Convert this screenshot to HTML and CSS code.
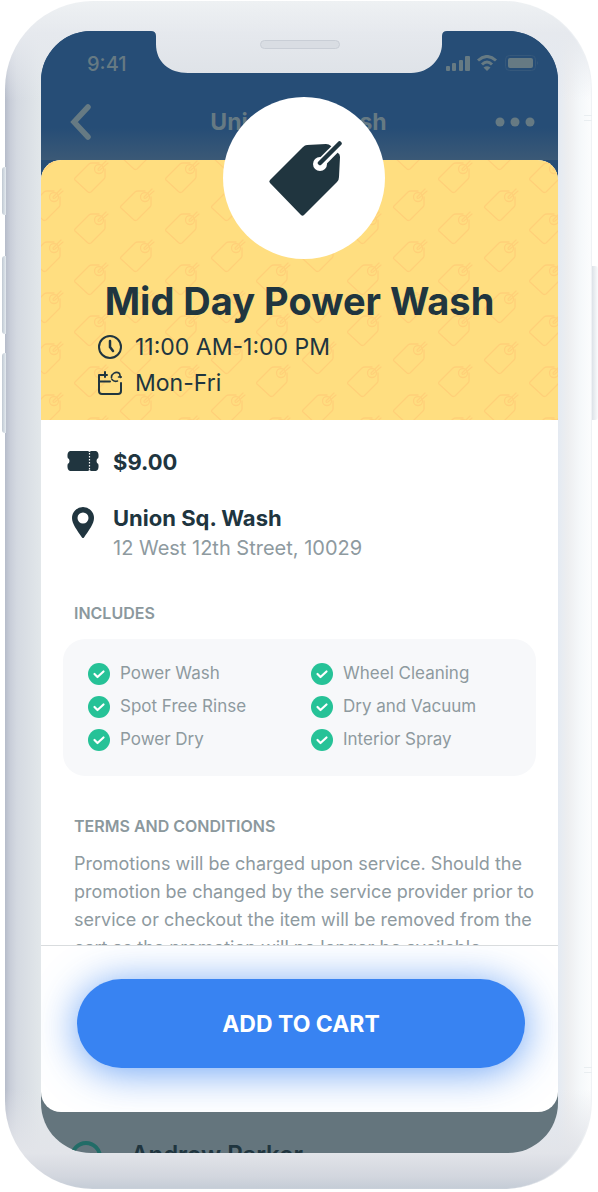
FILE: index.html
```html
<!DOCTYPE html>
<html lang="en">
<head>
<meta charset="utf-8">
<meta name="viewport" content="width=device-width, initial-scale=1">
<title>Mid Day Power Wash</title>
<link rel="stylesheet" href="styles.css">
</head>
<body>
<svg class="defs" aria-hidden="true">
  <defs>
    <g id="tag-outline" fill="none" stroke="#ffd078" stroke-width="1.3" stroke-linejoin="round" stroke-linecap="round">
      <path d="M25 2 H18 Q16 2 15 3 L1 17 Q0 18 1 19 L14 31 Q15 32 17 31 L30 18 Q31 17 31 16 V8"/>
      <circle cx="25" cy="8" r="4.5"/>
      <path d="M32 0 L24 8 Q24 10 26 9 L34 2"/>
    </g>
    <pattern id="tags" width="91" height="51" patternUnits="userSpaceOnUse">
      <use href="#tag-outline" x="33" y="1"/>
      <use href="#tag-outline" x="79" y="29"/>
      <use href="#tag-outline" x="-12" y="29"/>
      <use href="#tag-outline" x="79" y="-22"/>
      <use href="#tag-outline" x="-12" y="-22"/>
    </pattern>
    <symbol id="check" viewBox="0 0 22 22">
      <circle cx="11" cy="11" r="11" fill="#26c297"/>
      <path d="M6.500 11 L9.500 14 L15.500 8.500" fill="none" stroke="#fff" stroke-width="2.200" stroke-linecap="round" stroke-linejoin="round"/>
    </symbol>
  </defs>
</svg>

<div class="phone">
  <span class="side-key mute"></span>
  <span class="side-key vol-up"></span>
  <span class="side-key vol-down"></span>
  <span class="side-key power"></span>
  <span class="antenna upper"></span>
  <span class="antenna lower"></span>

  <main class="screen">
    <div class="notch">
      <svg width="291" height="42" viewBox="0 0 291 42" aria-hidden="true">
        <defs><linearGradient id="notch-fill" x2="0" y2="1"><stop stop-color="#e6e9ee"/><stop offset="1" stop-color="#dfe3e8"/></linearGradient></defs>
        <path d="M-4 -1 H295 V0 H293 Q288 0 288 5 V13 C288 27 276 42 257 42 H34 C15 42 2 31 2 13 V5 Q2 0 -3 0Z" fill="url(#notch-fill)"/>
      </svg>
      <span class="speaker"></span>
    </div>

    <header class="app-bar">
      <div class="status">
        <span class="time">9:41</span>
        <svg width="92" height="18" viewBox="0 0 92 18" fill="#667a83" aria-hidden="true">
          <rect x="0" y="11" width="4" height="5" rx="1"/><rect x="6" y="8" width="4" height="8" rx="1"/><rect x="13" y="5" width="4" height="11" rx="1"/><rect x="19" y="1" width="5" height="15" rx="1"/>
          <g fill="none" stroke="#667a83" stroke-width="3"><path d="M32 5.500 Q41 -2.500 50 5.500"/><path d="M36 9.500 Q41 4.500 46 9.500"/></g>
          <path d="M37.500 12.500 Q41 10 44.500 12.500 L41 16Z"/>
          <rect x="59.500" y=".5" width="30" height="15" rx="4" fill="none" stroke="#35587b"/>
          <rect x="62" y="3" width="25" height="10" rx="2"/><path d="M91 6 Q93 8 91 10Z" fill="#35587b"/>
        </svg>
      </div>
      <nav class="nav">
        <button class="bar-button" aria-label="Back">
          <svg width="22" height="36" viewBox="0 0 22 36"><path d="M18 3 L4 18 L18 33" fill="none" stroke="#667a83" stroke-width="5.500" stroke-linecap="round"/></svg>
        </button>
        <span class="nav-title">Union Sq. Wash</span>
        <button class="bar-button" aria-label="More">
          <svg width="40" height="10" viewBox="0 0 40 10" fill="#667a83"><circle cx="5" cy="5" r="4.500"/><circle cx="20" cy="5" r="4.500"/><circle cx="35" cy="5" r="4.500"/></svg>
        </button>
      </nav>
    </header>

    <section class="sheet">
      <div class="hero">
        <svg class="hero-pattern" aria-hidden="true"><rect width="100%" height="100%" fill="url(#tags)"/></svg>
        <div class="badge">
          <svg width="76" height="78" viewBox="0 0 76 78" aria-hidden="true">
            <path d="M37 8 Q39 6 41 6 L60 5 Q63 5 65 7 L72 14 Q74 15 74 18 L73 38 Q73 41 71 43 L38 76 Q36.500 77.500 35 76 L4 44 Q2.500 42.500 4 41Z" fill="#20353f"/>
            <circle cx="54" cy="25" r="7" fill="#fff"/>
            <path d="M54 25 L77 2" stroke="#fff" stroke-width="9"/>
            <path d="M54 24 L73.500 4.500" stroke="#20353f" stroke-width="4.500" stroke-linecap="round"/>
          </svg>
        </div>
        <h1 class="title">Mid Day Power Wash</h1>
        <ul class="schedule">
          <li>
            <svg width="24" height="24" viewBox="0 0 24 24" fill="none" stroke="#20353f" stroke-width="2" stroke-linecap="round" aria-hidden="true"><circle cx="12" cy="12" r="11"/><path d="M12 6 V12 L15 16" stroke-width="2.500"/></svg>
            11:00 AM-1:00 PM
          </li>
          <li>
            <svg width="24" height="24" viewBox="0 0 24 24" fill="none" stroke="#20353f" stroke-width="2" stroke-linecap="round" stroke-linejoin="round" aria-hidden="true"><path d="M1 4 V20 Q1 23 4 23 H20 Q23 23 23 20 V12 M1 10.500 H12 M1 4 H9 M7 1 V6"/><path d="M13.500 7 A5 5 0 0 1 21.500 2.500 L22.500 6.500 M23.500 6 H20.500 M14 8.500 A5 5 0 0 0 19.500 10" stroke-width="1.600"/></svg>
            Mon-Fri
          </li>
        </ul>
      </div>

      <div class="details">
        <div class="fact">
          <svg class="fact-icon" width="32" height="20" viewBox="0 0 32 20" aria-hidden="true">
            <path d="M3 0 H21 L22.500 1 L24 0 H29 Q32 1 31.500 6 Q31.500 7.500 30 8 Q29 10 30 12 Q31.500 12.500 31.500 14 Q32 19 29 20 H24 L22.500 19 L21 20 H3 Q0 19 .5 14 Q.5 12.500 2 12 Q3 10 2 8 Q.5 7.500 .5 6 Q0 1 3 0Z" fill="#20353f"/>
            <path d="M22.500 2 V19" stroke="#fff" stroke-width="1.200" stroke-dasharray="1.500 1.500"/>
          </svg>
          <strong class="fact-name">$9.00</strong>
        </div>
        <div class="fact place">
          <svg class="fact-icon" width="22" height="31" viewBox="0 0 22 31" aria-hidden="true"><path fill-rule="evenodd" d="M11 0 A11 11 0 0 1 22 11 C22 17 17 23 12 30.500 Q11 31.500 10 30.500 C5 23 0 17 0 11 A11 11 0 0 1 11 0Z M11 5.500 A5.500 5.500 0 1 0 11 16.500 A5.500 5.500 0 1 0 11 5.500Z" fill="#20353f"/></svg>
          <div>
            <strong class="fact-name">Union Sq. Wash</strong>
            <p class="address">12 West 12th Street, 10029</p>
          </div>
        </div>

        <h2 class="section-title">INCLUDES</h2>
        <ul class="includes">
          <li><svg class="check"><use href="#check"/></svg>Power Wash</li>
          <li><svg class="check"><use href="#check"/></svg>Wheel Cleaning</li>
          <li><svg class="check"><use href="#check"/></svg>Spot Free Rinse</li>
          <li><svg class="check"><use href="#check"/></svg>Dry and Vacuum</li>
          <li><svg class="check"><use href="#check"/></svg>Power Dry</li>
          <li><svg class="check"><use href="#check"/></svg>Interior Spray</li>
        </ul>

        <h2 class="section-title">TERMS AND CONDITIONS</h2>
        <p class="terms">Promotions will be charged upon service. Should the<br>promotion be changed by the service provider prior to<br>service or checkout the item will be removed from the<br>cart as the promotion will no longer be available.</p>
      </div>

      <footer class="action">
        <button class="add">ADD TO CART</button>
      </footer>
    </section>

    <div class="review">
      <svg width="32" height="32" viewBox="0 0 32 32" aria-hidden="true"><circle cx="16" cy="16" r="14" fill="none" stroke="#226c67" stroke-width="4"/></svg>
      <span>Andrew Parker</span>
    </div>
  </main>
</div>
</body>
</html>
```
FILE: styles.css
```css
* { box-sizing: border-box; }
body {
  margin: 0;
  padding: 1px 6px 3px 5px;
  background: #fff;
  color: #20353f;
  font-family: Inter, "Liberation Sans", sans-serif;
}
h1, h2, p, ul { margin: 0; padding: 0; }
ul { list-style: none; }
button { border: 0; padding: 0; background: none; font: inherit; }
.defs { position: absolute; width: 0; height: 0; }

/* Device frame */
.phone {
  position: relative;
  padding: 30px 34px 36px 36px;
  border-radius: 88px;
  background:
    linear-gradient(to bottom, #eef1f3 0, #e6e9ee 32px, transparent 100px),
    linear-gradient(to top, #c4ccd6 0, #d2d6de 12px, #e2e4e9 36px, transparent 100px),
    linear-gradient(to right, #b6bcca 0, #c8cdd8 5px, #d4d9e1 12px, #e2e7ea 36px, #e6e9ee 50%, #e4eaf2 calc(100% - 34px), #edeef0 calc(100% - 24px), #f5f8fa calc(100% - 12px), #fcfdfe 100%);
  box-shadow: inset -1px 0 1px #eef1f4;
}
.side-key {
  position: absolute;
  left: -3px;
  width: 4px;
  border-radius: 3px 0 0 3px;
  background: linear-gradient(to right, #bfc8d2, #e5ebf0);
}
.mute { top: 166px; height: 48px; }
.vol-up { top: 255px; height: 78px; }
.vol-down { top: 352px; height: 80px; }
.power {
  left: auto;
  right: -6px;
  top: 265px;
  width: 6px;
  height: 154px;
  border-radius: 0 3px 3px 0;
  background: linear-gradient(to right, #dde2e8, #fafbfc);
}
.antenna {
  position: absolute;
  right: 0;
  width: 8px;
  height: 6px;
  border: solid #e9eef1;
  border-width: 1px 0;
}
.antenna.upper { top: 114px; }
.antenna.lower { bottom: 116px; }

.screen {
  position: relative;
  overflow: hidden;
  border-radius: 50px;
  background: linear-gradient(#264d76 0 50%, #64757d 50%);
}
.notch {
  position: absolute;
  top: 0;
  left: 0;
  right: 0;
  display: flex;
  justify-content: center;
}
.notch svg { overflow: visible; }
.speaker {
  position: absolute;
  top: 9px;
  width: 80px;
  height: 9px;
  border: 1px solid #c9ced6;
  border-radius: 5px;
  background: #d9dde3;
}

.app-bar {
  height: 129px;
  color: #667a83;
  background: linear-gradient(#264d76 75%, #3b5976);
}
.status {
  display: flex;
  justify-content: space-between;
  align-items: center;
  padding: 21px 20px 0 46px;
}
.time { font-size: 20px; line-height: 24px; font-weight: 500; }
.nav {
  display: flex;
  justify-content: space-between;
  align-items: center;
  padding: 28px 23px 0 29px;
}
.bar-button { display: flex; color: inherit; }
.nav-title { padding-left: 10px; font-size: 23px; line-height: 28px; font-weight: 700; }

/* Promotion sheet */
.sheet { position: relative; border-radius: 20px; background: #fff; }
.hero {
  position: relative;
  padding: 117px 56px 19px;
  border-radius: 20px 20px 0 0;
  background: #ffde80;
}
.hero-pattern { position: absolute; inset: 0; width: 100%; height: 100%; border-radius: 20px 20px 0 0; }
.badge {
  position: absolute;
  top: -63px;
  left: 50%;
  display: flex;
  align-items: center;
  justify-content: center;
  width: 162px;
  height: 162px;
  margin-left: -77px;
  border-radius: 50%;
  background: #fff;
}
.title { position: relative; text-align: center; font-size: 38px; line-height: 48px; font-weight: 700; white-space: nowrap; }
.schedule { position: relative; margin-top: 4px; font-size: 23px; line-height: 36px; }
.schedule li { display: flex; align-items: center; gap: 13px; padding-left: 1px; }

.details { height: 525px; overflow: hidden; padding: 28px 22px 0; }
.fact { display: grid; grid-template-columns: 40px 1fr; gap: 10px; }
.fact-icon { justify-self: center; margin-top: 3px; }
.place { margin-top: 28px; }
.fact-name { display: block; font-size: 22px; line-height: 28px; font-weight: 700; }
.address { font-size: 20px; line-height: 32px; color: #8e9a9f; }
.section-title { padding: 0 11px; font-size: 16px; line-height: 20px; font-weight: 600; color: #8b989d; }
.place + .section-title { margin-top: 39px; }
.includes {
  display: grid;
  grid-template-columns: 223px 1fr;
  margin: 16px 0 40px;
  padding: 18px 25px 20px;
  border-radius: 22px;
  background: #f7f8fa;
  font-size: 17px;
  line-height: 33px;
  color: #8e9a9f;
}
.includes li { display: flex; align-items: center; gap: 10px; }
.check { width: 22px; height: 22px; }
.terms { margin-top: 14px; padding: 0 11px; font-size: 18px; line-height: 28px; color: #8e9a9f; white-space: nowrap; }

.action {
  overflow: hidden;
  padding: 33px 33px 44px 36px;
  border-top: 1px solid #d9dcde;
  border-radius: 0 0 20px 20px;
}
.add {
  display: block;
  width: 100%;
  height: 89px;
  border-radius: 45px;
  background: #3883f2;
  box-shadow: 0 4px 40px rgba(56, 131, 242, 0.75);
  color: #fff;
  font-size: 23px;
  font-weight: 700;
}
.review {
  display: flex;
  align-items: flex-start;
  gap: 29px;
  height: 41px;
  overflow: hidden;
  padding: 29px 29px 0;
  font-size: 24px;
  line-height: 28px;
  font-weight: 600;
}
.review svg { flex: none; }
```
